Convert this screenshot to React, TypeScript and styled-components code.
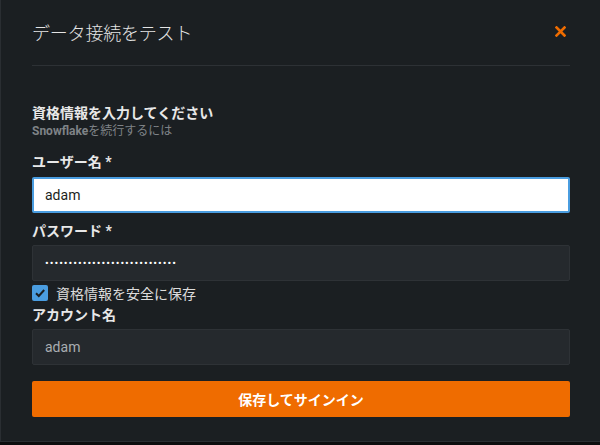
import React from "react";
import styled, { createGlobalStyle } from "styled-components";

const Global = createGlobalStyle`
  html, body { margin: 0; padding: 0; background: #0c0d0e; }
  body { font-family: Roboto, "Noto Sans CJK JP", sans-serif; }
  * { box-sizing: border-box; }
`;

const Dialog = styled.div`
  width: 600px;
  height: 442px;
  background: #1b1f22;
  border-left: 1px solid #2a2e32;
  border-bottom: 1px solid #2a2e32;
  padding: 0 30px 0 31px;
  display: flex;
  flex-direction: column;
`;

const Header = styled.div`
  height: 66px;
  display: flex;
  align-items: center;
  justify-content: space-between;
  border-bottom: 1px solid #2d3135;
  padding-bottom: 2px;
`;

const Title = styled.h1`
  margin: 0;
  font-family: "Noto Sans CJK JP", sans-serif;
  font-weight: 300;
  font-size: 18px;
  color: #e4e4e4;
  letter-spacing: -0.2px;
`;

const Close = styled.button`
  border: none;
  background: none;
  padding: 0;
  margin-right: 4px;
  width: 11px;
  height: 11px;
  display: flex;
  cursor: pointer;
`;

const Heading = styled.div`
  margin-top: 36px;
  font-family: "Noto Sans CJK JP", sans-serif;
  font-weight: 700;
  font-size: 14px;
  line-height: 20px;
  color: #e8e8e8;
`;

const Sub = styled.div`
  margin-top: 1px;
  font-family: Roboto, "Noto Sans CJK JP", sans-serif;
  font-size: 12px;
  line-height: 16px;
  color: #7f8387;
  b { font-weight: 700; }
`;

const Label = styled.label<{ $mt: number }>`
  display: block;
  margin-top: ${(p) => p.$mt}px;
  font-family: Roboto, "Noto Sans CJK JP", sans-serif;
  font-weight: 700;
  font-size: 14px;
  line-height: 20px;
  color: #e8e8e8;
`;

const Input = styled.input<{ $mt: number; $focused?: boolean }>`
  display: block;
  width: 100%;
  height: 36px;
  margin-top: ${(p) => p.$mt}px;
  padding: 0 12px;
  font-family: Roboto, sans-serif;
  font-size: 14px;
  border-radius: 2px;
  outline: none;
  background: ${(p) => (p.$focused ? "#ffffff" : "#25292d")};
  color: ${(p) => (p.$focused ? "#1b1f22" : "#a9adb1")};
  border: ${(p) => (p.$focused ? "2px solid #4a9de0" : "1px solid #2e3236")};
  padding-left: ${(p) => (p.$focused ? "11px" : "12px")};
`;

const Password = styled(Input)`
  color: #ffffff;
  font-size: 11px;
  letter-spacing: 1px;
`;

const CheckRow = styled.label`
  display: flex;
  align-items: center;
  gap: 8px;
  margin-top: 2px;
  height: 20px;
  font-family: "Noto Sans CJK JP", sans-serif;
  font-size: 14px;
  color: #dcdcdc;
`;

const Box = styled.span`
  width: 16px;
  height: 16px;
  border-radius: 2px;
  background: #4a9de0;
  display: flex;
  align-items: center;
  justify-content: center;
`;

const Button = styled.button`
  margin-top: 16px;
  height: 36px;
  width: 100%;
  border: none;
  border-radius: 2px;
  background: #ef6c00;
  color: #ffffff;
  font-family: "Noto Sans CJK JP", sans-serif;
  font-weight: 700;
  font-size: 14px;
  cursor: pointer;
`;

export default function App() {
  return (
    <>
      <Global />
      <Dialog>
        <Header>
          <Title>データ接続をテスト</Title>
          <Close aria-label="close">
            <svg width="11" height="11" viewBox="0 0 11 11">
              <path d="M1.5 1.5 L9.5 9.5 M9.5 1.5 L1.5 9.5" stroke="#ef6c00" strokeWidth="2.6" strokeLinecap="square" />
            </svg>
          </Close>
        </Header>
        <Heading>資格情報を入力してください</Heading>
        <Sub><b>Snowflake</b>を続行するには</Sub>
        <Label $mt={13}>ユーザー名 *</Label>
        <Input $mt={5} $focused defaultValue="adam" />
        <Label $mt={8}>パスワード *</Label>
        <Password $mt={4} type="password" defaultValue={"x".repeat(28)} />
        <CheckRow>
          <Box>
            <svg width="12" height="12" viewBox="0 0 12 12">
              <path d="M2 6.2 L4.8 9 L10.2 3" stroke="#1b1f22" strokeWidth="2" fill="none" />
            </svg>
          </Box>
          資格情報を安全に保存
        </CheckRow>
        <Label $mt={2}>アカウント名</Label>
        <Input $mt={4} defaultValue="adam" />
        <Button>保存してサインイン</Button>
      </Dialog>
    </>
  );
}
